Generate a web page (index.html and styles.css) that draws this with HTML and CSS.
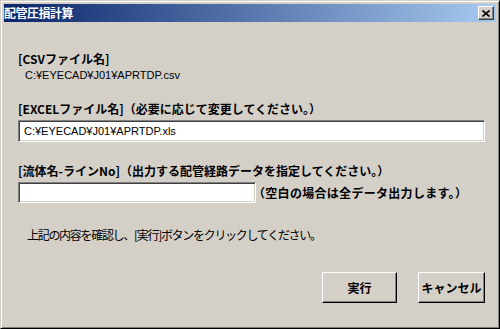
FILE: index.html
```html
<!DOCTYPE html>
<html lang="ja">
<head>
<meta charset="utf-8">
<title>配管圧損計算</title>
<link rel="stylesheet" href="styles.css">
</head>
<body>
<div class="window">
  <div class="titlebar">
    <span class="title">配管圧損計算</span>
    <button class="close" aria-label="閉じる">
      <svg width="8" height="7" viewBox="0 0 8 7"><path d="M0.5 0.5 L7.5 6.5 M7.5 0.5 L0.5 6.5" stroke="#000" stroke-width="1.6" fill="none"/></svg>
    </button>
  </div>
  <div class="content">
    <div class="label csv-label">[CSVファイル名]</div>
    <div class="path">C:¥EYECAD¥J01¥APRTDP.csv</div>
    <div class="label excel-label">[EXCELファイル名]（必要に応じて変更してください。）</div>
    <input class="field field-wide" type="text" value="C:¥EYECAD¥J01¥APRTDP.xls">
    <div class="label fluid-label">[流体名-ラインNo]（出力する配管経路データを指定してください。）</div>
    <div class="fluid-row">
      <input class="field field-short" type="text" value="">
      <span class="label note">（空白の場合は全データ出力します。）</span>
    </div>
    <div class="message">上記の内容を確認し、[実行]ボタンをクリックしてください。</div>
    <div class="buttons">
      <button class="btn btn-run">実行</button>
      <button class="btn btn-cancel">キャンセル</button>
    </div>
  </div>
</div>
</body>
</html>
```
FILE: styles.css
```css
* { box-sizing: border-box; }
html, body {
  margin: 0;
  padding: 0;
  background: #d4d0c8;
}
body {
  font-family: "Noto Sans CJK JP", "Liberation Sans", sans-serif;
  font-size: 12px;
  color: #000;
}
.window {
  width: 500px;
  height: 329px;
  background: #d4d0c8;
  border-style: solid;
  border-width: 1px;
  border-color: #d4d0c8 #000 #000 #d4d0c8;
  box-shadow: inset 1px 1px #ffffff, inset -1px -1px #808080;
  padding: 3px;
  display: flex;
  flex-direction: column;
}
.titlebar {
  height: 18px;
  background: linear-gradient(to right, #0a246a 0%, #a6caf0 100%);
  display: flex;
  align-items: center;
  padding-right: 2px;
}
.title {
  color: #fff;
  font-weight: bold;
  font-size: 12px;
  line-height: 18px;
  letter-spacing: -0.5px;
}
.close {
  margin-left: auto;
  width: 16px;
  height: 14px;
  padding: 0;
  background: #d4d0c8;
  border-style: solid;
  border-width: 1px;
  border-color: #fff #404040 #404040 #fff;
  box-shadow: inset -1px -1px #808080;
  display: flex;
  align-items: center;
  justify-content: center;
}
.close svg { display: block; }
.content {
  flex: 1;
  display: flex;
  flex-direction: column;
  padding-left: 14px;
  padding-right: 11px;
}
.label {
  font-weight: bold;
  line-height: 16px;
}
.csv-label { margin-top: 29px; }
.path {
  font-family: "Liberation Sans", sans-serif;
  font-size: 11px;
  line-height: 16px;
  margin-left: 7px;
}
.excel-label { margin-top: 18px; }
.field {
  font-family: "Liberation Sans", sans-serif;
  font-size: 11px;
  color: #000;
  background: #fff;
  border-style: solid;
  border-width: 1px;
  border-color: #808080 #fff #fff #808080;
  box-shadow: inset 1px 1px #404040, inset -1px -1px #d4d0c8;
  padding: 0 5px;
  margin: 0;
  outline: none;
}
.field-wide {
  margin-top: 3px;
  width: 467px;
  height: 22px;
}
.fluid-label { margin-top: 21px; }
.fluid-row {
  margin-top: 3px;
  display: flex;
  align-items: center;
}
.field-short {
  width: 238px;
  height: 21px;
}
.note {
  margin-left: -3px;
  letter-spacing: 0.3px;
}
.message {
  margin-top: 24px;
  margin-left: 9px;
  font-size: 12px;
  letter-spacing: -1.3px;
  line-height: 16px;
}
.buttons {
  margin-top: 29px;
  display: flex;
  justify-content: flex-end;
  gap: 21px;
}
.btn {
  height: 31px;
  font-family: inherit;
  font-size: 12px;
  font-weight: bold;
  color: #000;
  background: #d4d0c8;
  border-style: solid;
  border-width: 1px;
  border-color: #fff #000 #000 #fff;
  box-shadow: inset -1px -1px #808080, inset 1px 1px #d4d0c8;
  padding: 0;
}
.btn-run { width: 75px; }
.btn-cancel { width: 67px; }
```
